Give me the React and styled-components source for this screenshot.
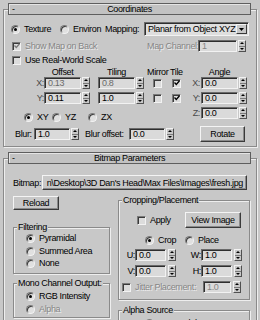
import React from 'react'
import styled, { createGlobalStyle } from 'styled-components'

const Global = createGlobalStyle`
  html, body { margin: 0; padding: 0; background: #c8c8c8; }
  body {
    font-family: "Liberation Sans", Arial, sans-serif;
    font-size: 9px;
    letter-spacing: -0.35px;
    color: #000;
  }
`

const Page = styled.div`
  width: 260px;
  height: 320px;
  overflow: hidden;
  box-sizing: border-box;
  padding: 9px 3px 0;
  background: #c8c8c8;
`

const Rollout = styled.section`
  display: flex;
  flex-direction: column;
  border: 1px solid #8a8a8a;
  box-shadow: inset 1px 1px 0 #eeeeee, 1px 1px 0 #eeeeee;
  margin-top: ${p => p.$mt || 0}px;
  padding-bottom: ${p => p.$pb || 0}px;
`

const TitleBar = styled.div`
  height: 10px;
  margin: -7px 5px 0 4px;
  border: 1px solid #5e5e5e;
  background: #c2c2c2;
  box-shadow: inset 1px 1px 0 #e4e4e4;
  display: flex;
  align-items: center;
  line-height: 10px;
`

const Minus = styled.span`
  width: 14px;
  padding-left: 3px;
  box-sizing: border-box;
  flex: none;
`

const TitleText = styled.span`
  flex: 1;
  text-align: center;
`

const Row = styled.div`
  display: flex;
  align-items: ${p => p.$top ? 'flex-start' : 'center'};
  height: ${p => p.$h ? p.$h + 'px' : 'auto'};
  margin-top: ${p => p.$mt || 0}px;
  padding-left: ${p => p.$pl || 0}px;
  flex: none;
`

const Col = styled.div`
  display: flex;
  flex-direction: column;
  width: ${p => p.$w}px;
  flex: none;
`

const Gap = styled.span`
  width: ${p => p.$w}px;
  flex: none;
`

const Label = styled.span`
  width: ${p => p.$w ? p.$w + 'px' : 'auto'};
  flex: none;
  text-align: ${p => p.$align || 'left'};
  color: ${p => p.$dim ? '#868686' : p.$axis ? '#4a4a4a' : '#000'};
  text-shadow: ${p => p.$dim ? '1px 1px 0 #ececec' : 'none'};
  white-space: nowrap;
  line-height: 10px;
`

const Choice = styled.span`
  display: flex;
  align-items: center;
  gap: 4px;
  width: ${p => p.$w ? p.$w + 'px' : 'auto'};
  height: ${p => p.$h || 12}px;
  flex: none;
  color: ${p => p.$dim ? '#868686' : '#000'};
  text-shadow: ${p => p.$dim ? '1px 1px 0 #ececec' : 'none'};
  white-space: nowrap;
  margin-top: ${p => p.$mt || 0}px;
`

const RadioDot = styled.span`
  width: 9px;
  height: 9px;
  box-sizing: border-box;
  flex: none;
  border-radius: 50%;
  border: 1px solid;
  border-color: #7a7a7a #f2f2f2 #f2f2f2 #7a7a7a;
  box-shadow: inset 1px 1px 0 #3a3a3a;
  background: #e0e0e0;
  display: flex;
  align-items: center;
  justify-content: center;
  &::after {
    content: '';
    width: 3px;
    height: 3px;
    border-radius: 50%;
    background: ${p => p.$on ? '#000' : 'transparent'};
  }
`

const Box = styled.span`
  width: 9px;
  height: 9px;
  box-sizing: border-box;
  flex: none;
  border: 1px solid;
  border-color: #7a7a7a #f2f2f2 #f2f2f2 #7a7a7a;
  box-shadow: inset 1px 1px 0 #3a3a3a;
  background: #dcdcdc;
  display: flex;
  align-items: center;
  justify-content: center;
`

const Field = styled.div`
  width: ${p => p.$w}px;
  height: 12px;
  box-sizing: border-box;
  flex: none;
  border: 1px solid;
  border-color: #6a6a6a #f2f2f2 #f2f2f2 #6a6a6a;
  box-shadow: inset 1px 1px 0 #2e2e2e;
  background: #dadada;
  padding-left: 3px;
  line-height: 10px;
  white-space: nowrap;
  overflow: hidden;
  color: ${p => p.$dim ? '#868686' : p.$faint ? '#6a6a6a' : '#000'};
`

const SpinWrap = styled.div`
  display: flex;
  align-items: center;
  flex: none;
`

const Arrows = styled.div`
  width: 8px;
  height: 12px;
  box-sizing: border-box;
  margin-left: ${p => p.$gap}px;
  flex: none;
  display: flex;
  flex-direction: column;
  border: 1px solid;
  border-color: #f2f2f2 #505050 #505050 #f2f2f2;
  background: #c8c8c8;
`

const Half = styled.span`
  flex: 1;
  display: flex;
  align-items: center;
  justify-content: center;
  & + & { border-top: 1px solid #7a7a7a; }
`

const Button = styled.button`
  width: ${p => p.$w}px;
  height: ${p => p.$h}px;
  margin-top: ${p => p.$mt || 0}px;
  box-sizing: border-box;
  flex: none;
  padding: 0;
  font: inherit;
  letter-spacing: inherit;
  color: #000;
  background: #c8c8c8;
  border: 1px solid;
  border-color: #f4f4f4 #3a3a3a #3a3a3a #f4f4f4;
  box-shadow: inset -1px -1px 0 #8a8a8a;
  display: flex;
  align-items: center;
  justify-content: center;
`

const PathButton = styled(Button)`
  justify-content: flex-end;
  overflow: hidden;
  white-space: nowrap;
  padding-right: 3px;
  span { flex: none; }
`

const Select = styled.div`
  width: 105px;
  height: 14px;
  box-sizing: border-box;
  flex: none;
  display: flex;
  align-items: center;
  border: 1px solid;
  border-color: #6a6a6a #f2f2f2 #f2f2f2 #6a6a6a;
  box-shadow: inset 1px 1px 0 #2e2e2e;
  background: #dedede;
  padding-left: 3px;
  white-space: nowrap;
`

const SelectBtn = styled.span`
  margin-left: auto;
  margin-right: 1px;
  width: 11px;
  height: 10px;
  box-sizing: border-box;
  border: 1px solid;
  border-color: #f4f4f4 #3a3a3a #3a3a3a #f4f4f4;
  background: #c8c8c8;
  display: flex;
  align-items: center;
  justify-content: center;
`

const Group = styled.fieldset`
  margin: ${p => p.$mt || 0}px 0 0;
  padding: 0;
  min-width: 0;
  border: 1px solid #8a8a8a;
  box-shadow: inset 1px 1px 0 #eeeeee, 1px 1px 0 #eeeeee;
`

const Legend = styled.legend`
  padding: 0 1px;
  margin-left: 3px;
  height: 10px;
  line-height: 10px;
  background: #c8c8c8;
  white-space: nowrap;
`

const GroupBody = styled.div`
  display: flex;
  flex-direction: column;
  padding: ${p => p.$pt || 0}px 0 ${p => p.$pb || 0}px ${p => p.$pl || 0}px;
`

const Tri = ({ up, w = 5, h = 3 }) => (
  <svg width={w} height={h} viewBox={`0 0 ${w} ${h}`}>
    <path d={up ? `M0 ${h} L${w / 2} 0 L${w} ${h}Z` : `M0 0 L${w / 2} ${h} L${w} 0Z`} fill="#000" />
  </svg>
)

const Spinner = ({ w, value, dim, faint, gap = 1 }) => (
  <SpinWrap>
    <Field $w={w} $dim={dim} $faint={faint}>{value}</Field>
    <Arrows $gap={gap}>
      <Half><Tri up w={4} h={2} /></Half>
      <Half><Tri w={4} h={2} /></Half>
    </Arrows>
  </SpinWrap>
)

const Radio = ({ on, children, w, dim, mt }) => (
  <Choice $w={w} $dim={dim} $mt={mt}>
    <RadioDot $on={on} />
    {children}
  </Choice>
)

const Check = ({ on, children, w, dim }) => (
  <Choice $w={w} $dim={dim}>
    <Box>
      {on && (
        <svg width="6" height="6" viewBox="0 0 6 6">
          <path d="M0.5 2.5 L2.3 4.5 L5.5 0.8" stroke={dim ? '#7a7a7a' : '#000'} strokeWidth="1.3" fill="none" />
        </svg>
      )}
    </Box>
    {children}
  </Choice>
)

const Title = ({ children }) => (
  <TitleBar>
    <Minus>-</Minus>
    <TitleText>{children}</TitleText>
    <Minus />
  </TitleBar>
)

const path = 'n\\Desktop\\3D Dan\'s Head\\Max Files\\Images\\fresh.jpg'

export default function App() {
  return (
    <Page>
      <Global />

      <Rollout $pb={4}>
        <Title>Coordinates</Title>

        <Row $h={14} $mt={7} $pl={7}>
          <Radio on w={49}>Texture</Radio>
          <Radio w={45}>Environ</Radio>
          <Label $w={39}>Mapping:</Label>
          <Select>
            Planar from Object XYZ
            <SelectBtn><Tri w={5} h={3} /></SelectBtn>
          </Select>
        </Row>

        <Row $h={12} $mt={4} $pl={8}>
          <Check on dim w={135}>Show Map on Back</Check>
          <Label $w={51} $dim>Map Channel:</Label>
          <Spinner w={39} value="1" dim />
        </Row>

        <Row $h={10} $mt={3} $pl={8}>
          <Check>Use Real-World Scale</Check>
        </Row>

        <Row $top $mt={2}>
          <Col $w={179}>
            <Row $h={10}>
              <Gap $w={40} />
              <Label $w={37} $align="center">Offset</Label>
              <Gap $w={17} />
              <Label $w={37} $align="center">Tiling</Label>
              <Gap $w={12} />
              <Label $w={21}>Mirror</Label>
              <Gap $w={2} />
              <Label $w={14}>Tile</Label>
            </Row>
            <Row $h={12}>
              <Label $w={40} $align="right" $axis>X:</Label>
              <Spinner w={37} value="0.13" faint />
              <Gap $w={8} />
              <Spinner w={37} value="0.8" faint />
              <Gap $w={9} />
              <Check />
              <Gap $w={10} />
              <Check on />
            </Row>
            <Row $h={12} $mt={3}>
              <Label $w={40} $align="right" $axis>Y:</Label>
              <Spinner w={37} value="0.11" />
              <Gap $w={8} />
              <Spinner w={37} value="1.0" />
              <Gap $w={9} />
              <Check />
              <Gap $w={10} />
              <Check on />
            </Row>
            <Row $h={10} $mt={8} $pl={20}>
              <Radio on w={28}>XY</Radio>
              <Radio w={36}>YZ</Radio>
              <Radio>ZX</Radio>
            </Row>
          </Col>

          <Col $w={66}>
            <Row $h={10}>
              <Gap $w={18} />
              <Label $w={37} $align="center">Angle</Label>
            </Row>
            <Row $h={12}>
              <Label $w={17} $align="right" $axis>X:</Label>
              <Gap $w={1} />
              <Spinner w={37} value="0.0" />
            </Row>
            <Row $h={12} $mt={3}>
              <Label $w={17} $align="right" $axis>Y:</Label>
              <Gap $w={1} />
              <Spinner w={37} value="0.0" />
            </Row>
            <Row $h={12} $mt={3}>
              <Label $w={17} $align="right" $axis>Z:</Label>
              <Gap $w={1} />
              <Spinner w={37} value="0.0" />
            </Row>
          </Col>
        </Row>

        <Row $h={16} $mt={4} $pl={11}>
          <Label $w={19}>Blur:</Label>
          <Spinner w={36} value="1.0" />
          <Gap $w={6} />
          <Label $w={44}>Blur offset:</Label>
          <Spinner w={36} value="0.0" />
          <Gap $w={26} />
          <Button $w={45} $h={16}>Rotate</Button>
        </Row>
      </Rollout>

      <Rollout $mt={11}>
        <Title>Bitmap Parameters</Title>

        <Row $h={15} $mt={11} $pl={9}>
          <Label $w={29}>Bitmap:</Label>
          <PathButton $w={205} $h={15}><span>{path}</span></PathButton>
        </Row>

        <Row $top $mt={5} $pl={9}>
          <Col $w={97}>
            <Button $w={46} $h={14} $mt={1}>Reload</Button>

            <Group $mt={12}>
              <Legend>Filtering</Legend>
              <GroupBody $pl={12} $pb={4}>
                <Radio on>Pyramidal</Radio>
                <Radio mt={1}>Summed Area</Radio>
                <Radio>None</Radio>
              </GroupBody>
            </Group>

            <Group $mt={4}>
              <Legend>Mono Channel Output:</Legend>
              <GroupBody $pl={12} $pt={2} $pb={2}>
                <Radio on>RGB Intensity</Radio>
                <Radio dim mt={1}>Alpha</Radio>
              </GroupBody>
            </Group>
          </Col>

          <Gap $w={8} />

          <Col $w={132}>
            <Group>
              <Legend>Cropping/Placement</Legend>
              <GroupBody $pb={6}>
                <Row $h={16} $mt={7} $pl={18}>
                  <Check w={48}>Apply</Check>
                  <Button $w={56} $h={16}>View Image</Button>
                </Row>
                <Row $h={12} $mt={6} $pl={26}>
                  <Radio on w={40}>Crop</Radio>
                  <Radio>Place</Radio>
                </Row>
                <Row $h={12} $mt={3}>
                  <Label $w={16} $align="right">U:</Label>
                  <Spinner w={31} value="0.0" gap={2} />
                  <Label $w={25} $align="right">W:</Label>
                  <Spinner w={31} value="1.0" gap={2} />
                </Row>
                <Row $h={12} $mt={4}>
                  <Label $w={16} $align="right">V:</Label>
                  <Spinner w={31} value="0.0" gap={2} />
                  <Label $w={25} $align="right">H:</Label>
                  <Spinner w={31} value="1.0" gap={2} />
                </Row>
                <Row $h={12} $mt={4} $pl={3}>
                  <Check dim w={81}>Jitter Placement:</Check>
                  <Spinner w={28} value="1.0" dim gap={2} />
                </Row>
              </GroupBody>
            </Group>

            <Group $mt={5}>
              <Legend>Alpha Source</Legend>
              <GroupBody $pl={26} $pt={2} $pb={4}>
                <Radio on>Image Alpha</Radio>
              </GroupBody>
            </Group>
          </Col>
        </Row>
      </Rollout>
    </Page>
  )
}
